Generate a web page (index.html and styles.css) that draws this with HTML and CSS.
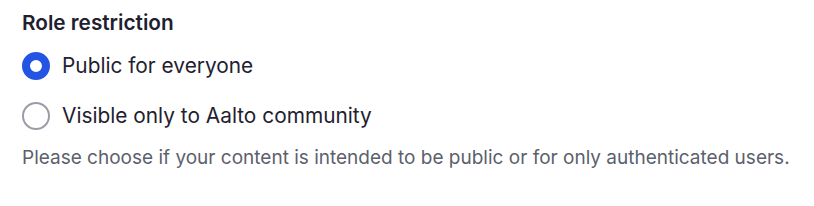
FILE: index.html
```html
<!DOCTYPE html>
<html>
<head>
<meta charset="utf-8">
<link rel="stylesheet" href="styles.css">
</head>
<body>
<fieldset class="field">
  <legend class="field-title">Role restriction</legend>
  <div class="options">
    <label class="option">
      <input type="radio" name="role" class="radio" checked>
      <span class="option-label">Public for everyone</span>
    </label>
    <label class="option">
      <input type="radio" name="role" class="radio">
      <span class="option-label">Visible only to Aalto community</span>
    </label>
  </div>
  <p class="help">Please choose if your content is intended to be public or for only authenticated users.</p>
</fieldset>
</body>
</html>
```
FILE: styles.css
```css
html, body {
  margin: 0;
  padding: 0;
  background: #ffffff;
}
body {
  font-family: Inter, "Noto Sans", sans-serif;
  color: #1f2130;
}
.field {
  border: 0;
  margin: 0;
  padding: 10px 22px 0 22px;
  min-width: 0;
}
.field-title {
  padding: 0;
  font-size: 20.75px;
  line-height: 26px;
  font-weight: 600;
  color: #1f2130;
  float: left;
  width: 100%;
}
.options {
  clear: both;
  display: flex;
  flex-direction: column;
  gap: 22px;
  padding-top: 16px;
}
.option {
  display: flex;
  align-items: center;
  gap: 12px;
  cursor: pointer;
}
.radio {
  appearance: none;
  -webkit-appearance: none;
  margin: 0;
  width: 28px;
  height: 28px;
  border-radius: 50%;
  border: 2px solid #9a9ca6;
  background: #fff;
  box-sizing: border-box;
  flex: none;
}
.radio:checked {
  border: 8px solid #2454e3;
  background: #fff;
}
.option-label {
  font-size: 20.85px;
  line-height: 28px;
  color: #1f2130;
}
.help {
  margin: 16px 0 0 0;
  font-size: 19px;
  line-height: 24px;
  color: #5c5f6c;
}
```
